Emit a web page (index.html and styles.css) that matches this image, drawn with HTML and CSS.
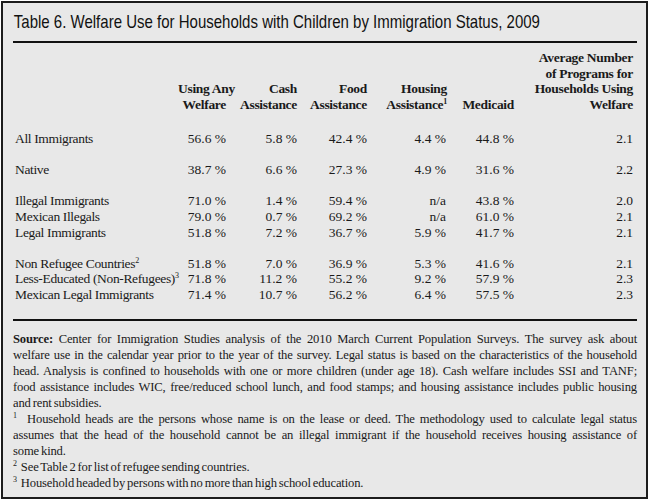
FILE: index.html
```html
<!DOCTYPE html>
<html lang="en">
<head>
<meta charset="utf-8">
<title>Table 6</title>
<link rel="stylesheet" href="styles.css">
</head>
<body>
<div class="panel">
  <div class="title-row"><h1 class="title">Table 6. Welfare Use for Households with Children by Immigration Status, 2009</h1></div>
  <div class="rule"></div>
  <table class="data">
    <colgroup>
      <col class="c-label"><col class="c-any"><col class="c-cash"><col class="c-food"><col class="c-house"><col class="c-med"><col class="c-avg">
    </colgroup>
    <thead>
      <tr>
        <th></th>
        <th>Using Any<br>Welfare</th>
        <th>Cash<br>Assistance</th>
        <th>Food<br>Assistance</th>
        <th>Housing<br>Assistance<sup>1</sup></th>
        <th>Medicaid</th>
        <th>Average Number<br>of Programs for<br>Households Using<br>Welfare</th>
      </tr>
    </thead>
    <tbody>
      <tr class="gap gap-first"><td colspan="7"></td></tr>
      <tr><td>All Immigrants</td><td>56.6 %</td><td>5.8 %</td><td>42.4 %</td><td>4.4 %</td><td>44.8 %</td><td>2.1</td></tr>
      <tr class="gap"><td colspan="7"></td></tr>
      <tr><td>Native</td><td>38.7 %</td><td>6.6 %</td><td>27.3 %</td><td>4.9 %</td><td>31.6 %</td><td>2.2</td></tr>
      <tr class="gap"><td colspan="7"></td></tr>
      <tr><td>Illegal Immigrants</td><td>71.0 %</td><td>1.4 %</td><td>59.4 %</td><td>n/a</td><td>43.8 %</td><td>2.0</td></tr>
      <tr><td>Mexican Illegals</td><td>79.0 %</td><td>0.7 %</td><td>69.2 %</td><td>n/a</td><td>61.0 %</td><td>2.1</td></tr>
      <tr><td>Legal Immigrants</td><td>51.8 %</td><td>7.2 %</td><td>36.7 %</td><td>5.9 %</td><td>41.7 %</td><td>2.1</td></tr>
      <tr class="gap"><td colspan="7"></td></tr>
      <tr><td>Non Refugee Countries<sup>2</sup></td><td>51.8 %</td><td>7.0 %</td><td>36.9 %</td><td>5.3 %</td><td>41.6 %</td><td>2.1</td></tr>
      <tr><td>Less-Educated (Non-Refugees)<sup>3</sup></td><td>71.8 %</td><td>11.2 %</td><td>55.2 %</td><td>9.2 %</td><td>57.9 %</td><td>2.3</td></tr>
      <tr><td>Mexican Legal Immigrants</td><td>71.4 %</td><td>10.7 %</td><td>56.2 %</td><td>6.4 %</td><td>57.5 %</td><td>2.3</td></tr>
    </tbody>
  </table>
  <div class="rule rule-notes"></div>
  <div class="notes">
    <p class="jl"><b>Source:</b> Center for Immigration Studies analysis of the 2010 March Current Population Surveys. The survey ask about</p>
    <p class="jl">welfare use in the calendar year prior to the year of the survey. Legal status is based on the characteristics of the household</p>
    <p class="jl">head. Analysis is confined to households with one or more children (under age 18). Cash welfare includes SSI and TANF;</p>
    <p class="jl">food assistance includes WIC, free/reduced school lunch, and food stamps; and housing assistance includes public housing</p>
    <p>and rent subsidies.</p>
    <p class="jl"><sup>1</sup>&nbsp; Household heads are the persons whose name is on the lease or deed. The methodology used to calculate legal status</p>
    <p class="jl">assumes that the head of the household cannot be an illegal immigrant if the household receives housing assistance of</p>
    <p>some kind.</p>
    <p><sup>2</sup>&nbsp; See Table 2 for list of refugee sending countries.</p>
    <p><sup>3</sup>&nbsp; Household headed by persons with no more than high school education.</p>
  </div>
</div>
</body>
</html>
```

FILE: styles.css
```css
html, body {
  margin: 0;
  padding: 0;
  background: #ffffff;
}

.panel {
  box-sizing: border-box;
  margin: 1px 2px 0 1px;
  height: 498px;
  border: 2px solid #1c1c1c;
  background: #e8e8e8;
  padding: 0 9px 0 10px;
  color: #1a1a1a;
}

.title-row {
  height: 38px;
  display: flex;
  align-items: center;
  overflow: hidden;
}

.title {
  margin: 0;
  padding-left: 1px;
  white-space: nowrap;
  font-family: "Liberation Sans", Arial, sans-serif;
  font-weight: normal;
  font-size: 19px;
  line-height: 22px;
  color: #111;
  transform: scaleX(0.79);
  transform-origin: left center;
}

.rule {
  height: 2px;
  background: #111;
}

.data {
  table-layout: fixed;
  width: 620px;
  border-collapse: collapse;
  margin-top: 7px;
  font-family: "Liberation Serif", "Times New Roman", serif;
  font-size: 13.5px;
  line-height: 15.6px;
  color: #1a1a1a;
}

.c-label { width: 165px; }
.c-any { width: 48px; }
.c-cash { width: 71px; }
.c-food { width: 70px; }
.c-house { width: 80px; }
.c-med { width: 67px; }
.c-avg { width: 119px; }

.data th {
  font-weight: bold;
  text-align: right;
  vertical-align: bottom;
  padding: 0;
  white-space: nowrap;
  letter-spacing: -0.3px;
}

.data td {
  padding: 0;
  height: 15.6px;
  text-align: right;
  white-space: nowrap;
}

.data td:first-child {
  text-align: left;
  padding-left: 2px;
  letter-spacing: -0.35px;
}

.data td:nth-child(5) {
  padding-right: 1px;
}

.data .gap td {
  height: 15.6px;
}

.data .gap-first td {
  height: 18.6px;
}

.data sup {
  font-size: 8px;
  line-height: 0;
  vertical-align: 5px;
}

.rule-notes {
  margin-top: 16px;
}

.notes {
  padding-top: 10px;
  font-family: "Liberation Serif", "Times New Roman", serif;
  font-size: 12.6px;
  line-height: 16px;
  letter-spacing: -0.15px;
  word-spacing: -1px;
  color: #1a1a1a;
}

.notes p {
  margin: 0;
  white-space: nowrap;
}

.notes p.jl {
  white-space: normal;
  text-align: justify;
  text-align-last: justify;
}

.notes sup {
  font-size: 8px;
  line-height: 0;
  vertical-align: 5px;
}
```
